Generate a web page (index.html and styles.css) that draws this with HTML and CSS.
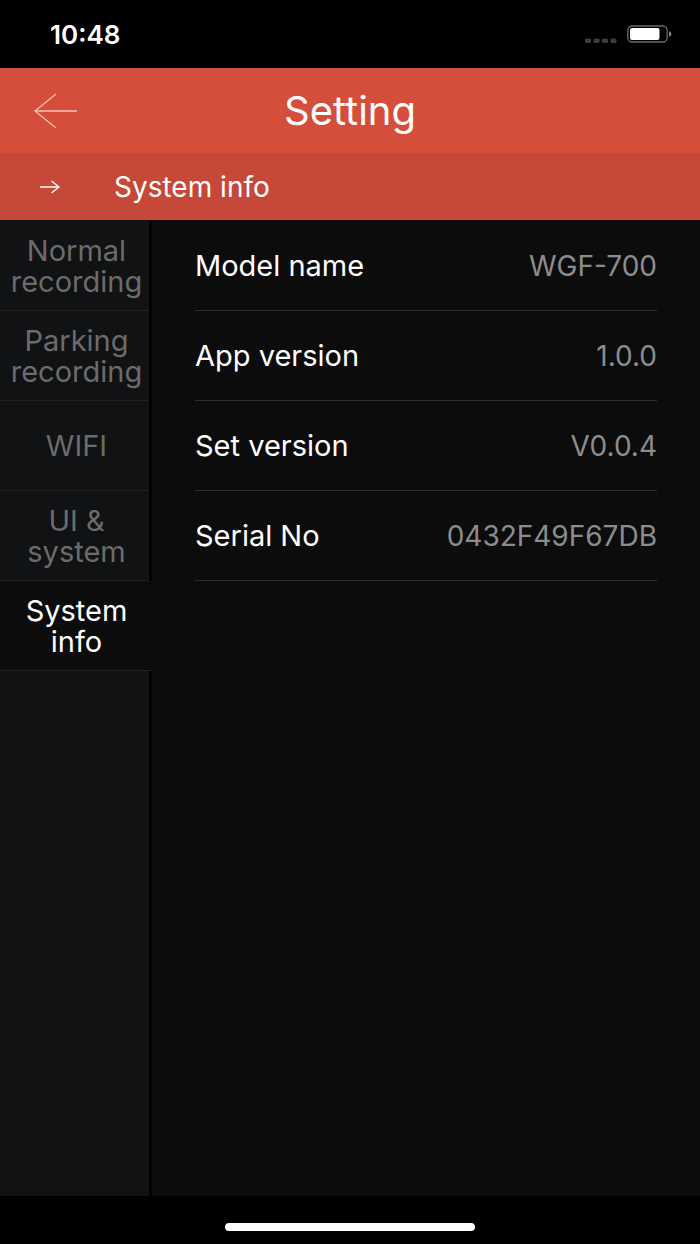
FILE: index.html
```html
<!DOCTYPE html>
<html lang="en">
    <head>
        <meta charset="utf-8">
        <meta name="viewport" content="width=device-width, initial-scale=1">
        <title>Setting</title>
        <link rel="stylesheet" href="styles.css">
    </head>
    <body>
        <div class="status-bar">
            <span class="time">10:48</span>
            <div class="status-icons">
                <svg class="signal" width="32" height="6" viewBox="0 0 32 6" fill="#3d3d3d">
                    <rect x="0" y="0.500" width="6" height="4.500" rx="1.500"/>
                    <rect x="8.600" y="0.500" width="6" height="4.500" rx="1.500"/>
                    <rect x="17" y="0.500" width="6" height="4.500" rx="1.500"/>
                    <rect x="25.500" y="0.500" width="6" height="4.500" rx="1.500"/>
                </svg>
                <svg class="battery" width="45" height="18" viewBox="0 0 45 18">
                    <rect x="0.8" y="1" width="39.4" height="16" rx="4.5" fill="none" stroke="#6a6a6a" stroke-width="1.3"/>
                    <rect x="3" y="3" width="29.5" height="12" rx="2" fill="#fff"/>
                    <path d="M42 6.2c3.2.9 3.2 4.7 0 5.6z" fill="#858585"/>
                </svg>
            </div>
        </div>

        <header class="header">
            <button class="back-button" aria-label="Back">
                <svg width="44" height="36" viewBox="0 0 44 36" fill="none" stroke="#f3c0b8" stroke-width="1.3">
                    <path d="M23 1L2 18L23 35M2 18H44"/>
                </svg>
            </button>
            <h1>Setting</h1>
        </header>

        <div class="sub-header">
            <svg width="20" height="14" viewBox="0 0 20 14" fill="none" stroke="#fff" stroke-width="1.4">
                <path d="M0 7H19M11.5 1L19 7L11.5 13"/>
            </svg>
            <h2>System info</h2>
        </div>

        <div class="content">
            <nav class="menu">
                <a href="#normal">Normal recording</a>
                <a href="#parking">Parking recording</a>
                <a href="#wifi">WIFI</a>
                <a href="#ui">UI &amp; system</a>
                <a href="#info" class="active">System info</a>
            </nav>
            <main>
                <dl class="info-list">
                    <div class="info-row"><dt>Model name</dt><dd>WGF-700</dd></div>
                    <div class="info-row"><dt>App version</dt><dd>1.0.0</dd></div>
                    <div class="info-row"><dt>Set version</dt><dd>V0.0.4</dd></div>
                    <div class="info-row"><dt>Serial No</dt><dd>0432F49F67DB</dd></div>
                </dl>
            </main>
        </div>

        <div class="home-bar">
            <div class="home-indicator"></div>
        </div>
    </body>
</html>
```
FILE: styles.css
```css
* {
    box-sizing: border-box;
}

body {
    margin: 0;
    min-height: 100vh;
    display: flex;
    flex-direction: column;
    background-color: #000;
    color: #fff;
    font-family: Inter, "Liberation Sans", sans-serif;
    font-size: 29px;
}

h1, h2, dl, dd {
    margin: 0;
    font-weight: 400;
}

svg {
    display: block;
}

/* phone status bar */
.status-bar {
    height: 68px;
    display: flex;
    justify-content: space-between;
    align-items: center;
    padding: 0 28px 0 50px;
}

.time {
    font-size: 26px;
    font-weight: 600;
}

.status-icons {
    display: flex;
    align-items: flex-end;
    gap: 10px;
}

.signal {
    margin-bottom: -1px;
}

/* header */
.header {
    height: 85px;
    display: grid;
    grid-template-columns: 1fr auto 1fr;
    align-items: center;
    padding: 0 33px;
    background-color: #d54d3b;
}

.header h1 {
    font-size: 40px;
}

.back-button {
    justify-self: start;
    padding: 0;
    border: none;
    background: none;
    cursor: pointer;
}

.sub-header {
    height: 67px;
    display: flex;
    align-items: center;
    gap: 54px;
    padding: 0 40px;
    background-color: #c54838;
}

.sub-header h2 {
    font-size: 28px;
}

/* menu and info */
.content {
    flex: 1;
    display: grid;
    grid-template-columns: 152px 1fr;
    background-color: #0c0c0c;
}

.menu {
    padding-top: 1px;
    border-right: 3px solid #000;
    background-color: #111214;
}

.menu a {
    height: 90px;
    display: flex;
    justify-content: center;
    align-items: center;
    padding: 0 4px 0 8px;
    border-bottom: 1px solid #202123;
    color: #6b6b6b;
    line-height: 31px;
    text-align: center;
    text-decoration: none;
}

.menu .active {
    margin-right: -3px; /* covers the divider */
    padding-right: 7px;
    background-color: #0c0c0c;
    color: #fff;
}

.info-list {
    padding: 1px 43px 0;
}

.info-row {
    height: 90px;
    display: flex;
    justify-content: space-between;
    align-items: center;
    border-bottom: 1px solid #2e2e2e;
}

.info-row dd {
    color: #8c8c8c;
    font-size: 28px;
}

/* home indicator */
.home-bar {
    height: 48px;
    display: flex;
    justify-content: center;
    align-items: center;
    padding-top: 14px;
}

.home-indicator {
    width: 250px;
    height: 8px;
    border-radius: 4px;
    background-color: #fff;
}
```
